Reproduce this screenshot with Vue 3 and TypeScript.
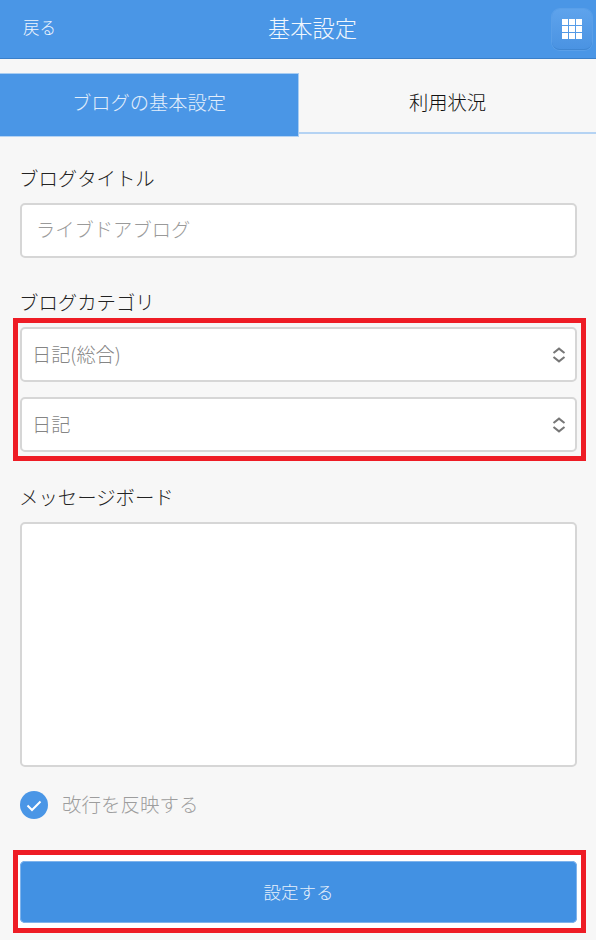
<script setup lang="ts">
import { ref } from 'vue'

const title = ref('')
const message = ref('')
const keepBreaks = ref(true)
const cells = Array.from({ length: 9 }, (_, i) => i)
const selects = ['日記(総合)', '日記']
</script>

<template>
  <div class="page">
    <header class="topbar">
      <span class="back">戻る</span>
      <h1 class="title">基本設定</h1>
      <button class="menu" type="button" aria-label="メニュー">
        <span class="grid">
          <i v-for="c in cells" :key="c"></i>
        </span>
      </button>
    </header>

    <nav class="tabs">
      <div class="tab active">ブログの基本設定</div>
      <div class="tab">利用状況</div>
    </nav>

    <form class="form" @submit.prevent>
      <label class="label first">ブログタイトル</label>
      <input v-model="title" class="input" type="text" placeholder="ライブドアブログ" />

      <label class="label second">ブログカテゴリ</label>
      <div class="mark selects">
        <div v-for="s in selects" :key="s" class="select">
          <span class="select-text">{{ s }}</span>
          <svg width="14" height="16" viewBox="0 0 14 16" fill="none" stroke="#777" stroke-width="2">
            <path d="M1.5 6 7 1.6 12.5 6" />
            <path d="M1.5 10 7 14.4 12.5 10" />
          </svg>
        </div>
      </div>

      <label class="label third">メッセージボード</label>
      <textarea v-model="message" class="area"></textarea>

      <div class="check" @click="keepBreaks = !keepBreaks">
        <svg width="28" height="28" viewBox="0 0 28 28">
          <circle cx="14" cy="14" r="14" :fill="keepBreaks ? '#4a96e6' : '#ccc'" />
          <path d="M7.5 14.5 12 19 20.5 10.5" fill="none" stroke="#fff" stroke-width="2" />
        </svg>
        <span class="check-text">改行を反映する</span>
      </div>

      <div class="mark action">
        <button class="submit" type="submit">設定する</button>
      </div>
    </form>
  </div>
</template>

<style scoped>
.page {
  width: 596px;
  height: 940px;
  overflow: hidden;
  background: #f7f7f7;
  font-family: "Noto Sans CJK JP", "Noto Sans", sans-serif;
  font-weight: 300;
  color: #222;
}
.topbar {
  height: 59px;
  box-sizing: border-box;
  border-bottom: 1px solid #3a7fc9;
  background: #4a96e6;
  display: grid;
  grid-template-columns: 1fr auto 1fr;
  align-items: center;
  padding: 0 4px 0 23px;
  color: #fff;
}
.back {
  font-size: 16.5px;
  color: #eef5fd;
  padding-bottom: 4px;
}
.title {
  margin: 0;
  font-size: 22.3px;
  font-weight: 300;
  color: #f2f7fd;
  padding: 0 0 4px 10px;
}
.menu {
  justify-self: end;
  width: 40px;
  height: 41px;
  padding: 0;
  border: 0;
  border-bottom: 1px solid #3f86d2;
  border-radius: 8px;
  background: linear-gradient(#5ea3ec, #4a93e2);
  box-shadow: 0 0 0 1px #5a9fe8;
  display: flex;
  align-items: center;
  justify-content: center;
}
.grid {
  display: grid;
  grid-template-columns: repeat(3, 6px);
  grid-auto-rows: 6px;
  gap: 1px;
}
.grid i {
  background: #fff;
}
.tabs {
  display: flex;
  margin-top: 14px;
  height: 63px;
  align-items: flex-start;
}
.tab {
  flex: 1;
  height: 61px;
  box-sizing: border-box;
  border-bottom: 2px solid #b5d3f3;
  display: flex;
  align-items: center;
  justify-content: center;
  font-size: 19.3px;
  color: #111;
  padding-bottom: 2px;
}
.tab.active {
  flex: none;
  width: 299px;
  height: 64px;
  background: #4a96e6;
  border-top: 1px solid #a9cdf2;
  border-right: 1px solid #a9cdf2;
  border-bottom-width: 1px;
  color: #e3eefb;
  padding-bottom: 7px;
}
.form {
  display: flex;
  flex-direction: column;
  padding: 0 19px 0 20px;
}
.label {
  display: block;
  font-size: 19.4px;
  line-height: 28px;
  color: #222;
  margin-left: -1px;
}
.label.first { margin-top: 28px; }
.label.second { margin-top: 30px; }
.label.third { margin-top: 22px; }
.input,
.select,
.area {
  box-sizing: border-box;
  width: 100%;
  background: #fff;
  border: 2px solid #d6d6d6;
  border-radius: 5px;
  font-family: inherit;
  font-weight: 300;
}
.input {
  height: 55px;
  margin-top: 11px;
  padding: 0 14px 4px 14px;
  font-size: 19.3px;
  outline: none;
}
.input::placeholder {
  color: #9a9a9a;
  opacity: 1;
}
.mark {
  box-sizing: border-box;
  border: 5px solid #ee1c25;
  margin-left: -7px;
  margin-right: -9px;
}
.selects {
  margin-top: 2px;
  padding: 4px 4px 5px 2px;
  height: 143px;
  display: flex;
  flex-direction: column;
  gap: 15px;
}
.select {
  height: 55px;
  flex: none;
  display: flex;
  align-items: center;
  justify-content: space-between;
  padding: 0 9px 0 10px;
  font-size: 19.2px;
  color: #858585;
}
.select-text {
  padding-bottom: 2px;
}
.area {
  display: block;
  height: 245px;
  margin-top: 11px;
  resize: none;
  outline: none;
}
.check {
  display: flex;
  align-items: center;
  gap: 14px;
  margin-top: 24px;
  height: 28px;
  font-size: 19.5px;
  color: #9d9d9d;
}
.check-text {
  padding-bottom: 4px;
}
.action {
  margin-top: 31px;
  padding: 6px 4px 5px 2px;
  height: 83px;
  background: #fff;
}
.submit {
  display: block;
  width: 100%;
  height: 62px;
  border: 0;
  border-radius: 5px;
  padding: 0 0 2px;
  background: #4291e3;
  box-shadow: inset 0 0 0 1px #7fb3ec;
  color: #e6f0fb;
  font-family: inherit;
  font-weight: 300;
  font-size: 17.5px;
}
</style>
